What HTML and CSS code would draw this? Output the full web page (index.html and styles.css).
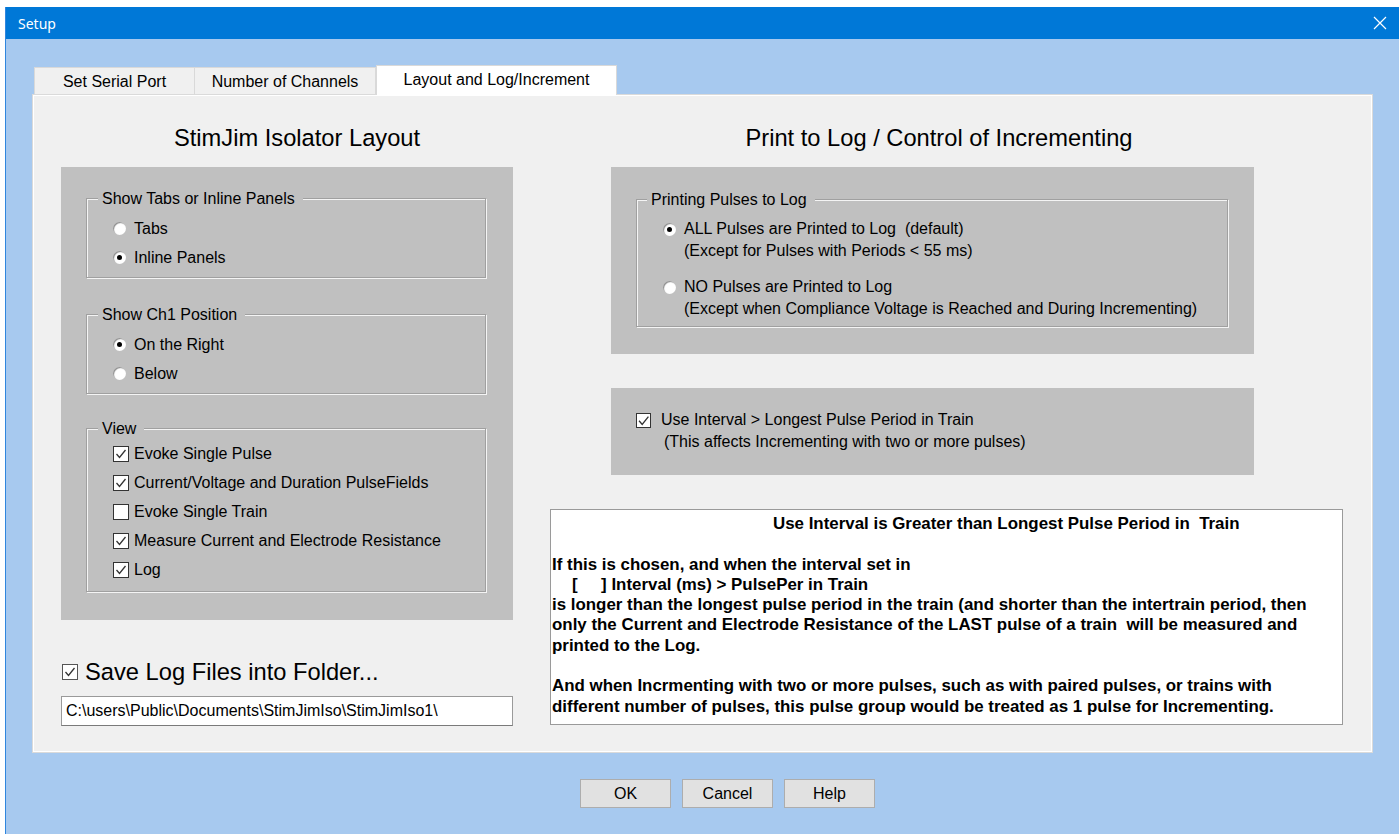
FILE: index.html
```html
<!DOCTYPE html>
<html lang="en">
<head>
<meta charset="utf-8">
<title>Setup</title>
<link rel="stylesheet" href="styles.css">
</head>
<body>
<div class="window">
  <div class="titlebar">
    <span class="title">Setup</span>
    <svg class="close" width="14" height="14" viewBox="0 0 14 14"><path d="M1 1 L13 13 M13 1 L1 13" stroke="#fff" stroke-width="1.2" fill="none"/></svg>
  </div>
  <div class="client">
    <div class="tabs">
      <div class="tab">Set Serial Port</div>
      <div class="tab">Number of Channels</div>
      <div class="tab active">Layout and Log/Increment</div>
    </div>
    <div class="page">
      <section class="col col-left">
        <h2 class="heading">StimJim Isolator Layout</h2>
        <div class="shade shade-layout">
          <fieldset class="group group-tabs">
            <legend>Show Tabs or Inline Panels</legend>
            <div class="opt"><span class="radio"></span>Tabs</div>
            <div class="opt"><span class="radio on"></span>Inline Panels</div>
          </fieldset>
          <fieldset class="group group-ch1">
            <legend>Show Ch1 Position</legend>
            <div class="opt"><span class="radio on"></span>On the Right</div>
            <div class="opt"><span class="radio"></span>Below</div>
          </fieldset>
          <fieldset class="group group-view">
            <legend>View</legend>
            <div class="opt"><span class="check on"></span>Evoke Single Pulse</div>
            <div class="opt"><span class="check on"></span>Current/Voltage and Duration PulseFields</div>
            <div class="opt"><span class="check"></span>Evoke Single Train</div>
            <div class="opt"><span class="check on"></span>Measure Current and Electrode Resistance</div>
            <div class="opt"><span class="check on"></span>Log</div>
          </fieldset>
        </div>
        <div class="save-row"><span class="check on"></span>Save Log Files into Folder...</div>
        <div class="path-field">C:\users\Public\Documents\StimJimIso\StimJimIso1\</div>
      </section>
      <section class="col col-right">
        <h2 class="heading">Print to Log / Control of Incrementing</h2>
        <div class="shade shade-print">
          <fieldset class="group group-print">
            <legend>Printing Pulses to Log</legend>
            <div class="opt opt-tight"><span class="radio on"></span>ALL Pulses are Printed to Log&nbsp; (default)</div>
            <div class="sub">(Except for Pulses with Periods &lt; 55 ms)</div>
            <div class="opt opt-tight opt-gap"><span class="radio"></span>NO Pulses are Printed to Log</div>
            <div class="sub">(Except when Compliance Voltage is Reached and During Incrementing)</div>
          </fieldset>
        </div>
        <div class="shade shade-interval">
          <div class="opt opt-tight"><span class="check on"></span>Use Interval &gt; Longest Pulse Period in Train</div>
          <div class="sub sub-check">(This affects Incrementing with two or more pulses)</div>
        </div>
        <div class="note">
          <p class="note-title">Use Interval is Greater than Longest Pulse Period in&nbsp; Train</p>
          <p>If this is chosen, and when the interval set in<br>
          <span class="note-indent">[&nbsp;&nbsp;&nbsp;&nbsp; ] Interval (ms) &gt; PulsePer in Train</span><br>
          is longer than the longest pulse period in the train (and shorter than the intertrain period, then<br>
          only the Current and Electrode Resistance of the LAST pulse of a train&nbsp; will be measured and<br>
          printed to the Log.</p>
          <p>And when Incrmenting with two or more pulses, such as with paired pulses, or trains with<br>
          different number of pulses, this pulse group would be treated as 1 pulse for Incrementing.</p>
        </div>
      </section>
    </div>
    <div class="buttons">
      <button class="btn">OK</button>
      <button class="btn">Cancel</button>
      <button class="btn">Help</button>
    </div>
  </div>
</div>
</body>
</html>
```
FILE: styles.css
```css
* { box-sizing: border-box; }

html, body {
  margin: 0;
  padding: 0;
  background: #ffffff;
  font-family: "Liberation Sans", Arial, sans-serif;
  color: #000;
}

/* dialog frame */
.window {
  margin: 7px 0 0 5px;
  width: 1394px;
  height: 827px;
  background: #a7c9ef;
  border-left: 1px solid #2f86de;
  display: flex;
  flex-direction: column;
}

.titlebar {
  height: 32px;
  background: #0078d7;
  display: flex;
  align-items: center;
  justify-content: space-between;
  padding: 0 12px 0 12px;
  flex: none;
}

.title {
  color: #fff;
  font-size: 14px;
  font-family: "Noto Sans", "Liberation Sans", sans-serif;
}

.close { display: block; }

.client {
  padding: 26px 0 0 26px;
}

/* tab strip */
.tabs {
  display: flex;
  align-items: flex-end;
  height: 29px;
  padding-left: 2px;
  position: relative;
  z-index: 1;
}

.tab {
  height: 27px;
  background: #f0f0f0;
  border: 1px solid #d9d9d9;
  border-bottom: none;
  font-size: 16px;
  display: flex;
  align-items: center;
  justify-content: center;
  padding-top: 1px;
}

.tab:nth-child(1) { width: 161px; }
.tab:nth-child(2) { width: 181px; border-left: none; }

.tab.active {
  width: 241px;
  height: 30px;
  margin-bottom: -1px;
  background: #ffffff;
  border-color: #d9d9d9;
  padding-top: 0;
  padding-bottom: 2px;
}

/* tab page */
.page {
  width: 1341px;
  height: 659px;
  background: #f0f0f0;
  border: 1px solid #dadada;
  box-shadow: inset 1px 1px 0 #ffffff, inset -1px -1px 0 #ffffff;
  display: grid;
  grid-template-columns: 452px 793px;
  column-gap: 37px;
  padding: 29px 0 0 28px;
}

.col { display: flex; flex-direction: column; }

.heading {
  margin: 0 0 15px 0;
  height: 28px;
  line-height: 28px;
  font-size: 23.7px;
  font-weight: normal;
  text-align: center;
}

.col-left .heading { padding-left: 20px; }
.col-right .heading { margin-left: 61px; width: 643px; padding-left: 13px; }

.shade {
  background: #c0c0c0;
}

.shade-layout {
  height: 453px;
  padding: 22px 27px 0 25px;
  display: flex;
  flex-direction: column;
}

/* etched group boxes */
.group {
  margin: 0;
  border: 1px solid #a0a0a0;
  box-shadow: inset 1px 1px 0 #f4f4f4, 1px 1px 0 #f4f4f4;
  padding: 7px 0 5px 26px;
  font-size: 16px;
  min-width: 0;
}

.group legend {
  margin-left: -15px;
  padding: 0 8px 0 4px;
  background: #c0c0c0;
  line-height: 18px;
  font-size: 16px;
  position: relative;
  top: 1px;
}

.group-ch1 { margin-top: 27px; }

.group-view {
  margin-top: 25px;
  padding-top: 2px;
  padding-bottom: 7px;
}

.opt {
  height: 29px;
  display: flex;
  align-items: center;
  font-size: 16px;
  white-space: nowrap;
}

.radio {
  width: 13px;
  height: 13px;
  border-radius: 50%;
  background: radial-gradient(circle at 60% 60%, #ffffff 55%, #e6e6e6 75%, #b5b5b5 100%);
  box-shadow: inset 1px 1px 1px #8c8c8c;
  margin-right: 8px;
  position: relative;
  flex: none;
}

.radio.on::after {
  content: "";
  position: absolute;
  left: 4px;
  top: 4px;
  width: 5px;
  height: 5px;
  border-radius: 50%;
  background: #000;
}

.check {
  width: 16px;
  height: 16px;
  border: 1px solid #333;
  background: #fff;
  margin-right: 5px;
  flex: none;
}

.check.on {
  background: #fff url("data:image/svg+xml;utf8,<svg xmlns='http://www.w3.org/2000/svg' width='14' height='14' viewBox='0 0 14 14'><path d='M2.5 7 L5.5 10.5 L11.5 3' stroke='%23333' stroke-width='1.3' fill='none'/></svg>") no-repeat center;
}

/* save-to-folder row */
.save-row {
  margin-top: 38px;
  height: 28px;
  display: flex;
  align-items: center;
  font-size: 23.7px;
  padding-left: 1px;
}

.save-row .check {
  width: 16px;
  height: 16px;
  margin-right: 7px;
  border-color: #555;
}

.path-field {
  margin-top: 10px;
  height: 30px;
  border: 1px solid #9a9a9a;
  border-bottom-color: #7a7a7a;
  background: #fff;
  font-size: 16px;
  line-height: 28px;
  padding-left: 4px;
  white-space: nowrap;
}

/* right column */
.shade-print,
.shade-interval {
  margin-left: 61px;
  width: 643px;
}

.shade-print {
  height: 187px;
  padding: 23px 26px 0 25px;
}

.group-print { padding: 10px 0 6px 26px; }

.group-print legend { margin-left: -16px; }

.opt-tight { height: 22px; }
.opt-gap { margin-top: 14px; }

.sub {
  height: 22px;
  line-height: 22px;
  font-size: 16px;
  padding-left: 21px;
  white-space: nowrap;
}

.shade-interval {
  margin-top: 34px;
  height: 87px;
  padding: 21px 0 0 25px;
}

.shade-interval .check {
  width: 15px;
  height: 15px;
  margin-right: 10px;
}

.sub-check { padding-left: 28px; }

.note {
  margin-top: 34px;
  height: 216px;
  background: #fff;
  border: 1px solid #9a9a9a;
  padding: 4px 0 0 1px;
  font-family: "Liberation Sans Narrow", "Liberation Sans", Arial, sans-serif;
  font-weight: bold;
  font-size: 16.9px;
  line-height: 20.3px;
  white-space: nowrap;
}

.note p { margin: 0 0 20.3px 0; }

.note-title { padding-left: 221px; }

.note-indent { padding-left: 20px; }

/* dialog buttons */
.buttons {
  display: flex;
  gap: 11px;
  margin: 26px 0 0 548px;
}

.btn {
  width: 91px;
  height: 29px;
  background: #e1e1e1;
  border: 1px solid #adadad;
  font-family: "Liberation Sans", Arial, sans-serif;
  font-size: 16px;
  color: #000;
  padding: 0;
}
```
